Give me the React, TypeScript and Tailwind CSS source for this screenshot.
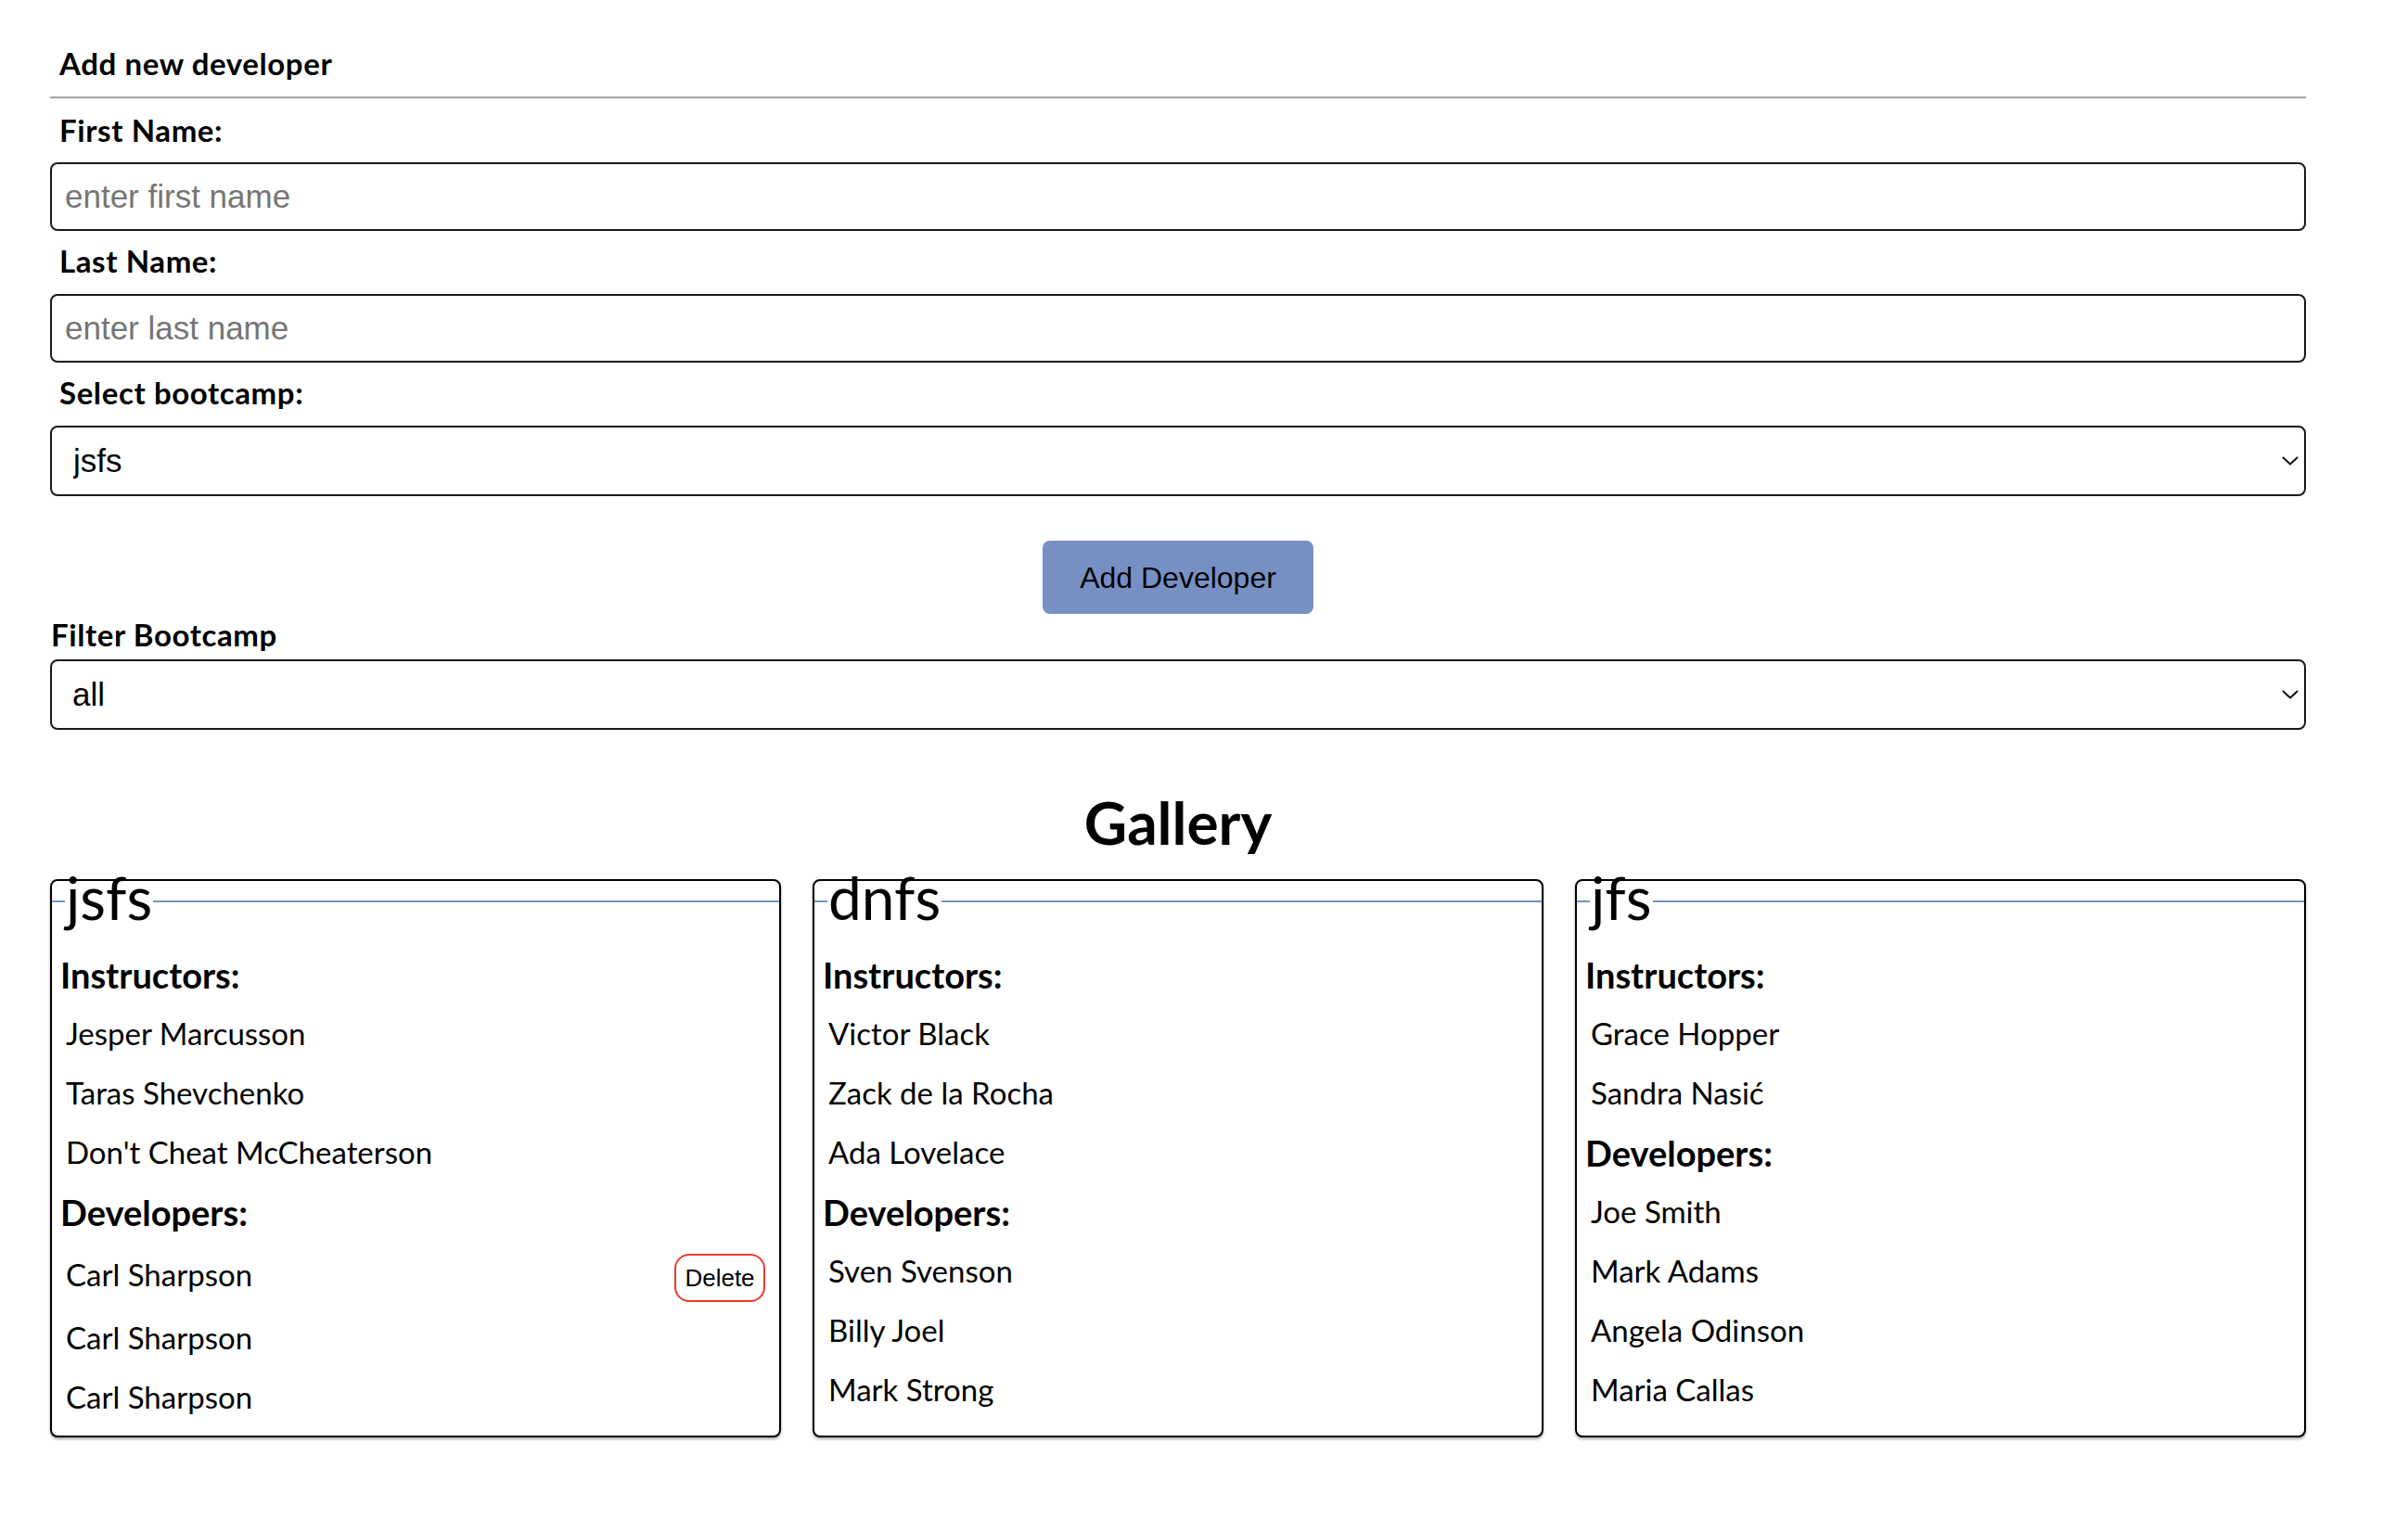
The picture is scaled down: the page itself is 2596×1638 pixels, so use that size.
import React from 'react';

type Bootcamp = {
  name: string;
  instructors: string[];
  developers: string[];
};

const bootcamps: Bootcamp[] = [
  {
    name: 'jsfs',
    instructors: ['Jesper Marcusson', 'Taras Shevchenko', "Don't Cheat McCheaterson"],
    developers: ['Carl Sharpson', 'Carl Sharpson', 'Carl Sharpson'],
  },
  {
    name: 'dnfs',
    instructors: ['Victor Black', 'Zack de la Rocha', 'Ada Lovelace'],
    developers: ['Sven Svenson', 'Billy Joel', 'Mark Strong'],
  },
  {
    name: 'jfs',
    instructors: ['Grace Hopper', 'Sandra Nasić'],
    developers: ['Joe Smith', 'Mark Adams', 'Angela Odinson', 'Maria Callas'],
  },
];

const Chevron: React.FC = () => (
  <svg
    className="pointer-events-none absolute right-[8px] top-1/2 -translate-y-1/2"
    width="18"
    height="10"
    viewBox="0 0 18 10"
    fill="none"
  >
    <path d="M1.5 1.5 L9 8.5 L16.5 1.5" stroke="#111" strokeWidth="2" strokeLinecap="round" strokeLinejoin="round" />
  </svg>
);

const Label: React.FC<{ children: React.ReactNode; className?: string }> = ({ children, className }) => (
  <div className={`h-[40px] text-[33px] leading-[40px] font-bold tracking-[0.6px] ${className ?? ''}`}>{children}</div>
);

const BootcampCard: React.FC<{ camp: Bootcamp; withDelete?: boolean }> = ({ camp, withDelete }) => (
  <div className="rounded-[8px] border-2 border-black bg-white px-[9px] pb-[9px] shadow-[0_2px_3px_rgba(0,0,0,0.35)]">
    {/* legend on the blue rule */}
    <div className="-mx-[9px] -mt-[14px] flex h-[64px] items-start">
      <div className="mt-[35px] h-[2px] w-[14px] bg-[#7790c4]" />
      <span className="px-[1px] text-[64px] leading-[64px]">{camp.name}</span>
      <div className="mt-[35px] h-[2px] flex-1 bg-[#7790c4]" />
    </div>

    <div className="mt-[19px] flex h-[64px] items-center text-[38px] font-bold">Instructors:</div>
    {camp.instructors.map((name, i) => (
      <div key={`i-${i}`} className="flex h-[64px] items-center pl-[6px] text-[33px]">
        {name}
      </div>
    ))}

    <div className="flex h-[64px] items-center text-[38px] font-bold">Developers:</div>
    {camp.developers.map((name, i) =>
      withDelete && i === 0 ? (
        <div key={`d-${i}`} className="flex h-[72px] items-center justify-between pl-[6px] pr-[6px] text-[33px]">
          <span>{name}</span>
          <button className="mt-[6px] h-[52px] w-[98px] rounded-[16px] border-2 border-[#ec3a2c] bg-white font-['Liberation_Sans',Arial,sans-serif] text-[26px] text-black">
            Delete
          </button>
        </div>
      ) : (
        <div key={`d-${i}`} className="flex h-[64px] items-center pl-[6px] text-[33px]">
          {name}
        </div>
      )
    )}
  </div>
);

export default function App() {
  return (
    <div className="min-h-screen bg-white pb-[80px] pl-[54px] pr-[110px] font-[Lato,sans-serif] text-black">
      {/* add developer form */}
      <form onSubmit={(e) => e.preventDefault()}>
        <Label className="pl-[10px] pt-[48px] box-content">Add new developer</Label>
        <div className="mt-[16px] border-t-2 border-b border-t-[#a6a6a6] border-b-[#eeeeee]" />

        <Label className="mt-[13px] pl-[10px]">First Name:</Label>
        <input
          placeholder="enter first name"
          className="mt-[15px] block h-[74px] w-full rounded-[8px] border-2 border-[#1a1a1a] px-[14px] font-['Liberation_Sans',Arial,sans-serif] text-[35px] outline-none placeholder:text-[#757575]"
        />

        <Label className="mt-[12px] pl-[10px]">Last Name:</Label>
        <input
          placeholder="enter last name"
          className="mt-[16px] block h-[74px] w-full rounded-[8px] border-2 border-[#1a1a1a] px-[14px] font-['Liberation_Sans',Arial,sans-serif] text-[35px] outline-none placeholder:text-[#757575]"
        />

        <Label className="mt-[12px] pl-[10px]">Select bootcamp:</Label>
        <div className="relative mt-[16px]">
          <select
            defaultValue="jsfs"
            className="block h-[76px] w-full appearance-none rounded-[8px] border-2 border-[#1a1a1a] bg-white pl-[23px] font-['Liberation_Sans',Arial,sans-serif] text-[35px] text-black outline-none"
          >
            <option value="jsfs">jsfs</option>
            <option value="dnfs">dnfs</option>
            <option value="jfs">jfs</option>
          </select>
          <Chevron />
        </div>

        <div className="mt-[48px] flex justify-center">
          <button
            type="submit"
            className="h-[79px] w-[292px] rounded-[8px] bg-[#7790c4] font-['Liberation_Sans',Arial,sans-serif] text-[32px] text-black"
          >
            Add Developer
          </button>
        </div>
      </form>

      {/* filter */}
      <Label className="mt-[2px] pl-[1px]">Filter Bootcamp</Label>
      <div className="relative mt-[7px]">
        <select
          defaultValue="all"
          className="block h-[76px] w-full appearance-none rounded-[8px] border-2 border-[#1a1a1a] bg-white pl-[22px] font-['Liberation_Sans',Arial,sans-serif] text-[35px] text-black outline-none"
        >
          <option value="all">all</option>
          <option value="jsfs">jsfs</option>
          <option value="dnfs">dnfs</option>
          <option value="jfs">jfs</option>
        </select>
        <Chevron />
      </div>

      {/* gallery */}
      <h1 className="mt-[60px] h-[80px] text-center text-[64px] font-bold leading-[80px]">Gallery</h1>
      <div className="mt-[21px] grid grid-cols-3 gap-[34px]">
        {bootcamps.map((camp, i) => (
          <BootcampCard key={camp.name} camp={camp} withDelete={i === 0} />
        ))}
      </div>
    </div>
  );
}
